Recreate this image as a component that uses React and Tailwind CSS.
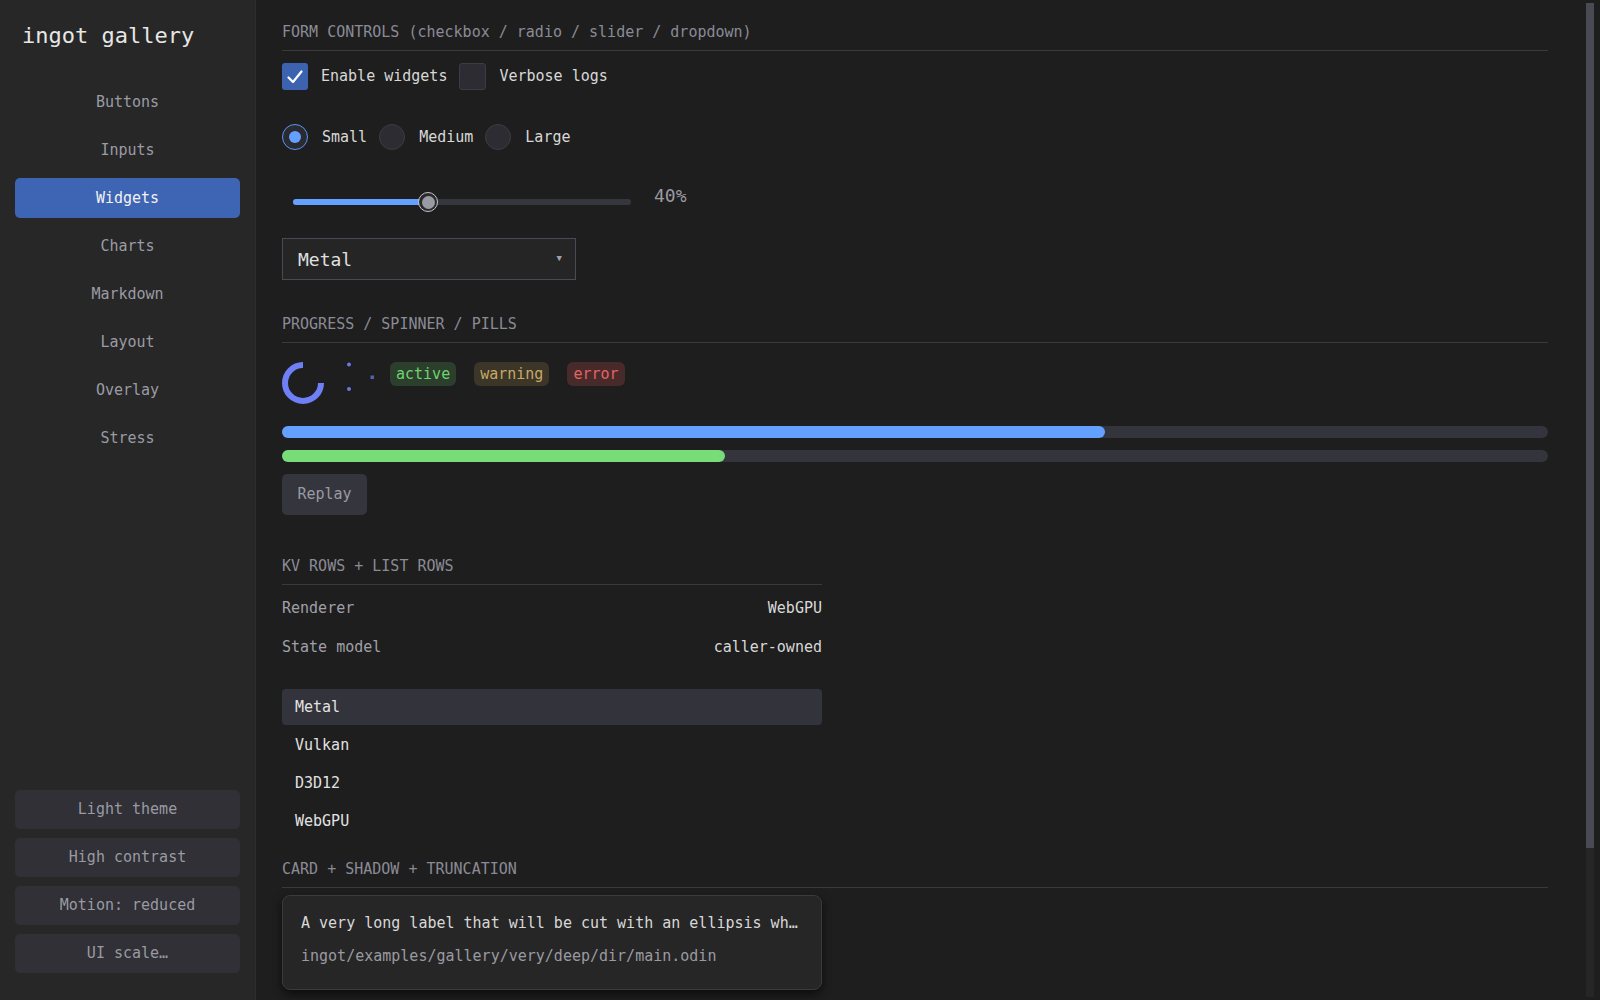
import React from 'react';

const navItems = ['Buttons', 'Inputs', 'Widgets', 'Charts', 'Markdown', 'Layout', 'Overlay', 'Stress'];
const footerItems = ['Light theme', 'High contrast', 'Motion: reduced', 'UI scale…'];

const SectionTitle = ({ children }) => (
    <div className="border-b border-[#3a3a3a] pb-[8px] text-[15px] leading-[20px] text-[#8b8b96]">
        {children}
    </div>
);

const Checkbox = ({ checked, label }) => (
    <div className="flex items-center">
        {checked ? (
            <div className="flex h-[27px] w-[26px] items-center justify-center rounded-[3px] bg-[#3d63b0]">
                <svg width="20" height="20" viewBox="0 0 20 20" fill="none">
                    <path d="M3.5 10.5 L8 15 L16.5 4.5" stroke="#fff" strokeWidth="2.2" strokeLinecap="round" strokeLinejoin="round" />
                </svg>
            </div>
        ) : (
            <div className="h-[27px] w-[27px] rounded-[3px] border border-[#3c3c44] bg-[#2c2c32]" />
        )}
        <span className="ml-[13px] text-[15px] text-[#d8d8d8]">{label}</span>
    </div>
);

const Radio = ({ checked, label }) => (
    <div className="flex items-center">
        {checked ? (
            <div className="flex h-[26px] w-[26px] items-center justify-center rounded-full border-[1.5px] border-[#5b95f5] bg-[#2a2a30]">
                <div className="h-[12px] w-[12px] rounded-full bg-[#64a0ff]" />
            </div>
        ) : (
            <div className="h-[26px] w-[26px] rounded-full border border-[#3c3c44] bg-[#2c2c32]" />
        )}
        <span className="ml-[14px] text-[15px] text-[#d8d8d8]">{label}</span>
    </div>
);

const Pill = ({ children, bg, fg }) => (
    <span className={`flex h-[24px] items-center rounded-[6px] px-[6px] text-[15px] ${bg} ${fg}`}>{children}</span>
);

export default function App() {
    return (
        <div className="flex h-screen w-full overflow-hidden bg-[#1e1e1e] font-['DejaVu_Sans_Mono',monospace]">
            {/* sidebar */}
            <aside className="flex w-[256px] shrink-0 flex-col border-r border-[#2e2e2e] bg-[#272727] px-[15px] pb-[27px]">
                <div className="px-[7px] pt-[22px] text-[22px] leading-[28px] text-[#e6e6e6]">ingot gallery</div>
                <nav className="mt-[32px] flex flex-col gap-[8px]">
                    {navItems.map((item) => (
                        <div
                            key={item}
                            className={
                                item === 'Widgets'
                                    ? 'flex h-[40px] items-center justify-center rounded-[5px] bg-[#3e65b4] text-[15px] text-[#f2f2f2]'
                                    : 'flex h-[40px] items-center justify-center text-[15px] text-[#9b9ba5]'
                            }
                        >
                            {item}
                        </div>
                    ))}
                </nav>
                <div className="mt-auto flex flex-col gap-[9px]">
                    {footerItems.map((item) => (
                        <div key={item} className="flex h-[39px] items-center justify-center rounded-[5px] bg-[#303036] text-[15px] text-[#9a9aa2]">
                            {item}
                        </div>
                    ))}
                </div>
            </aside>

            {/* main */}
            <main className="flex min-w-0 flex-1">
                <div className="min-w-0 flex-1 pl-[26px] pr-[38px] pt-[22px]">
                    <SectionTitle>FORM CONTROLS (checkbox / radio / slider / dropdown)</SectionTitle>

                    <div className="mt-[12px] flex items-center gap-[12px]">
                        <Checkbox checked label="Enable widgets" />
                        <Checkbox label="Verbose logs" />
                    </div>

                    <div className="mt-[34px] flex items-center gap-[12px]">
                        <Radio checked label="Small" />
                        <Radio label="Medium" />
                        <Radio label="Large" />
                    </div>

                    <div className="mt-[32px] flex h-[40px] items-center">
                        <div className="relative flex h-[40px] w-[360px] items-center px-[11px]">
                            <div className="relative h-[6px] w-full rounded-full bg-[#36363e]">
                                <div className="h-full w-[40%] rounded-full bg-[#64a0ff]" />
                                <div className="absolute left-[40%] top-1/2 flex h-[20px] w-[20px] -translate-x-1/2 -translate-y-1/2 items-center justify-center rounded-full border border-[#c4c4cc] bg-[#2a2a2e]">
                                    <div className="h-[13px] w-[13px] rounded-full bg-[#9a9aa2]" />
                                </div>
                            </div>
                        </div>
                        <span className="mb-[14px] ml-[12px] text-[18px] text-[#9a9aa2]">40%</span>
                    </div>

                    <div className="mt-[16px] flex h-[42px] w-[294px] items-center justify-between border border-[#4a4a55] bg-[#252525] pl-[15px] pr-[13px]">
                        <span className="text-[18px] text-[#e0e0e0]">Metal</span>
                        <span className="text-[9px] text-[#a0a0a8]">▼</span>
                    </div>

                    <div className="mt-[34px]">
                        <SectionTitle>PROGRESS / SPINNER / PILLS</SectionTitle>
                    </div>

                    <div className="mt-[19px] flex h-[42px] items-start">
                        <svg width="100" height="42" viewBox="0 0 100 42">
                            <path d="M21 3 A18 18 0 1 0 39 21" fill="none" stroke="#6f7ff5" strokeWidth="6" />
                            <circle cx="67" cy="2.5" r="2" fill="#6a78e0" />
                            <circle cx="67" cy="27" r="2" fill="#6a78e0" />
                            <rect x="88.5" y="13.5" width="3.5" height="3.5" fill="#5560b0" />
                        </svg>
                        <div className="ml-[8px] flex items-center gap-[18px]">
                            <Pill bg="bg-[#2b3f2c]" fg="text-[#6fd36f]">active</Pill>
                            <Pill bg="bg-[#3b3628]" fg="text-[#c9a866]">warning</Pill>
                            <Pill bg="bg-[#482a2a]" fg="text-[#e46464]">error</Pill>
                        </div>
                    </div>

                    <div className="mt-[22px] h-[12px] w-full rounded-full bg-[#34343c]">
                        <div className="h-full w-[65%] rounded-full bg-[#64a0ff]" />
                    </div>
                    <div className="mt-[12px] h-[12px] w-full rounded-full bg-[#34343c]">
                        <div className="h-full w-[35%] rounded-full bg-[#78dc78]" />
                    </div>

                    <div className="mt-[12px] flex h-[41px] w-[85px] items-center justify-center rounded-[5px] bg-[#35353d] text-[15px] text-[#9a9aa2]">
                        Replay
                    </div>

                    <div className="mt-[41px] w-[540px]">
                        <SectionTitle>KV ROWS + LIST ROWS</SectionTitle>
                        <div className="mt-[4px]">
                            <div className="flex h-[39px] items-center justify-between text-[15px]">
                                <span className="text-[#a0a0a8]">Renderer</span>
                                <span className="text-[#d8d8d8]">WebGPU</span>
                            </div>
                            <div className="flex h-[39px] items-center justify-between text-[15px]">
                                <span className="text-[#a0a0a8]">State model</span>
                                <span className="text-[#d8d8d8]">caller-owned</span>
                            </div>
                        </div>
                        <div className="mt-[22px] flex flex-col gap-[2px]">
                            {['Metal', 'Vulkan', 'D3D12', 'WebGPU'].map((item, i) => (
                                <div
                                    key={item}
                                    className={`flex h-[36px] items-center rounded-[4px] px-[13px] text-[15px] text-[#e2e2e2] ${i === 0 ? 'bg-[#33333b]' : ''}`}
                                >
                                    {item}
                                </div>
                            ))}
                        </div>
                    </div>

                    <div className="mt-[20px]">
                        <SectionTitle>CARD + SHADOW + TRUNCATION</SectionTitle>
                    </div>

                    <div className="mt-[7px] w-[540px] rounded-[8px] border border-[#3a3a42] bg-[#262626] px-[18px] pb-[23px] pt-[17px] shadow-[0_4px_10px_rgba(0,0,0,0.6)]">
                        <div className="truncate text-[15px] leading-[20px] text-[#d8d8d8]">
                            A very long label that will be cut with an ellipsis when it overflows the card width
                        </div>
                        <div className="mt-[13px] text-[15px] leading-[20px] text-[#9a9aa2]">
                            ingot/examples/gallery/very/deep/dir/main.odin
                        </div>
                    </div>
                </div>

                {/* scrollbar */}
                <div className="mr-[6px] mt-[3px] mb-[3px] flex w-[8px] shrink-0 flex-col bg-[#262626]">
                    <div className="h-[845px] bg-[#4a4a55]" />
                </div>
            </main>
        </div>
    );
}
